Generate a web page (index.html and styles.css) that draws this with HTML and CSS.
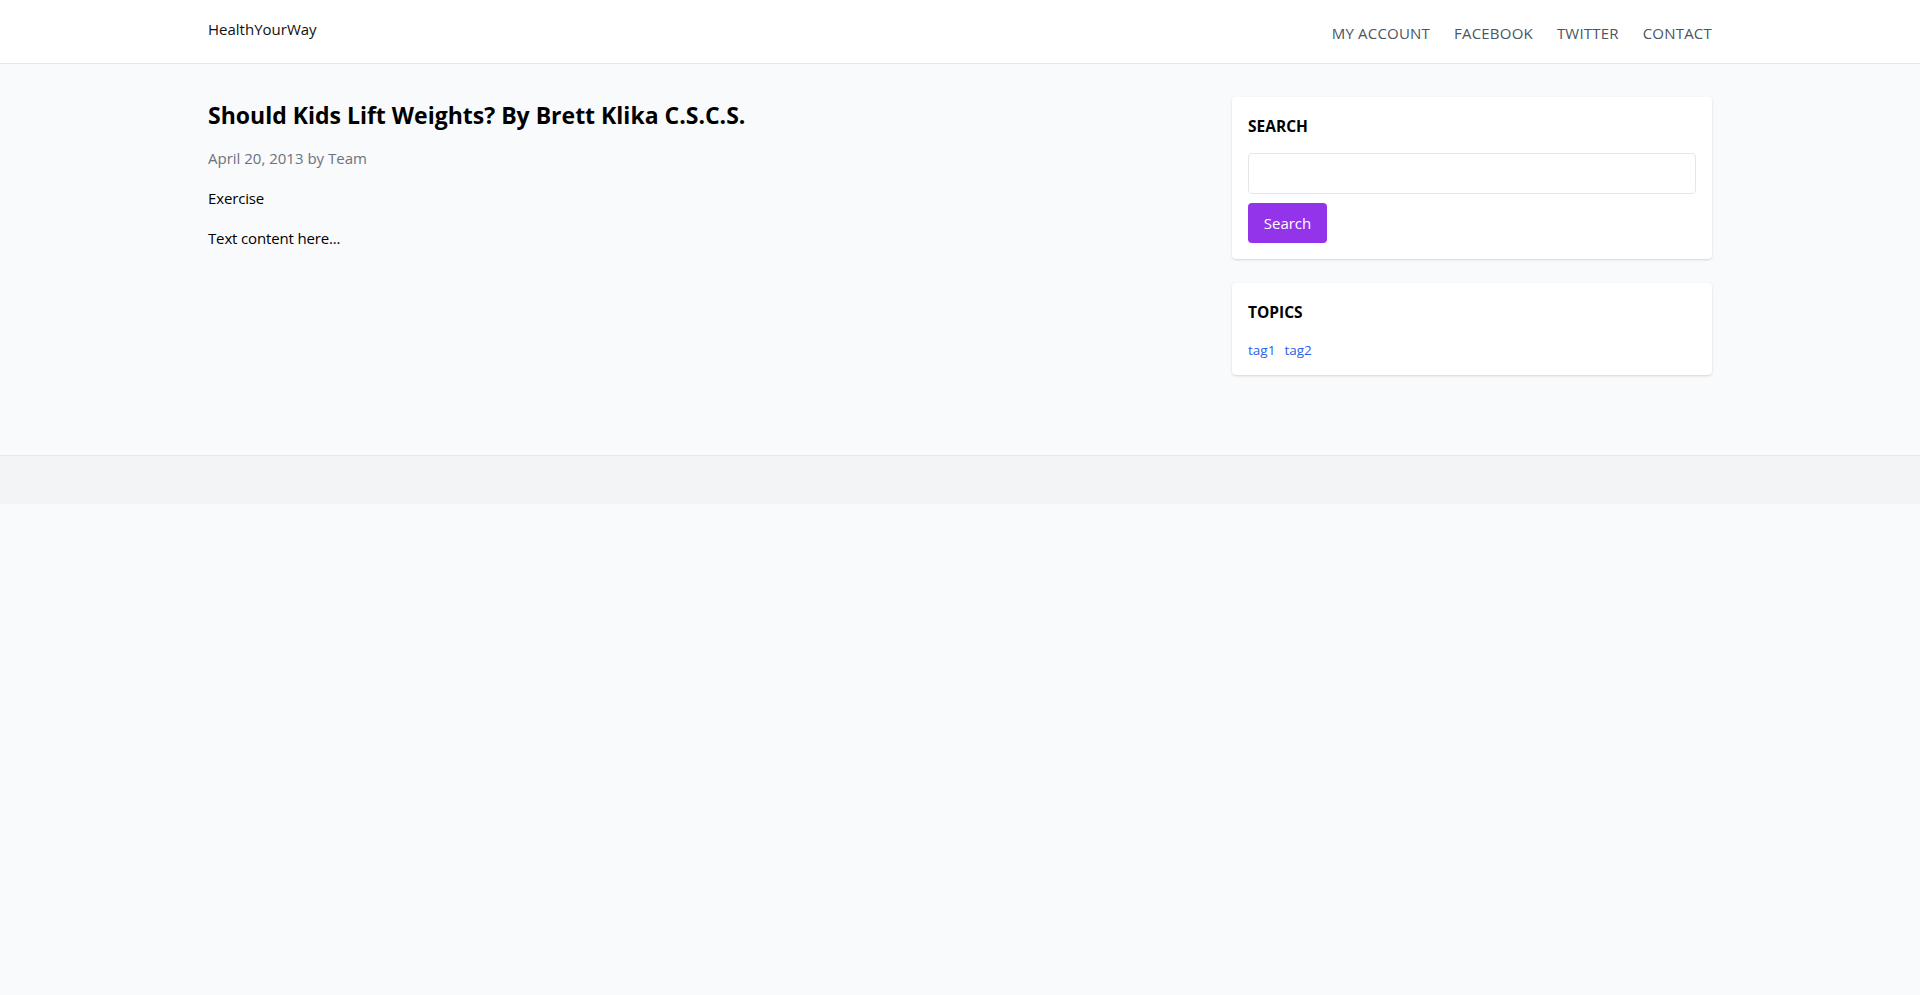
FILE: index.html
```html
<!DOCTYPE html>
<html lang="en">
<head>
<meta charset="utf-8">
<title>HealthYourWay</title>
<link rel="stylesheet" href="styles.css">
</head>
<body>
<header class="site-header">
  <div class="container header-inner">
    <a class="logo" href="#">HealthYourWay</a>
    <nav class="nav">
      <a href="#">MY ACCOUNT</a>
      <a href="#">FACEBOOK</a>
      <a href="#">TWITTER</a>
      <a href="#">CONTACT</a>
    </nav>
  </div>
</header>
<main class="container layout">
  <article class="post">
    <h1 class="post-title">Should Kids Lift Weights? By Brett Klika C.S.C.S.</h1>
    <p class="post-meta">April 20, 2013 by Team</p>
    <p class="post-cat">Exercise</p>
    <p class="post-body">Text content here...</p>
  </article>
  <aside class="sidebar">
    <section class="card">
      <h2 class="card-title">SEARCH</h2>
      <input class="search-input" type="text">
      <button class="search-btn">Search</button>
    </section>
    <section class="card">
      <h2 class="card-title">TOPICS</h2>
      <div class="tags"><a href="#">tag1</a><a href="#">tag2</a></div>
    </section>
  </aside>
</main>
<footer class="site-footer"></footer>
</body>
</html>
```
FILE: styles.css
```css
* { box-sizing: border-box; }
html, body { margin: 0; padding: 0; }
body {
  background: #f9fafb;
  font-family: "Open Sans", "Noto Sans", sans-serif;
  color: #000;
}
a { text-decoration: none; }
.container {
  max-width: 1536px;
  margin: 0 auto;
  padding: 0 16px;
}
.site-header {
  background: #fff;
  border-bottom: 1px solid #e5e7eb;
  height: 64px;
}
.header-inner {
  display: flex;
  justify-content: space-between;
  align-items: flex-start;
  height: 63px;
}
.logo {
  color: #111;
  font-size: 15px;
  line-height: 24px;
  margin-top: 17px;
}
.nav {
  display: flex;
  gap: 24px;
  margin-top: 21px;
}
.nav a {
  color: #4b5563;
  font-size: 15px;
  letter-spacing: 0.2px;
  line-height: 24px;
}
.layout {
  display: grid;
  grid-template-columns: repeat(3, 1fr);
  gap: 32px;
  padding-top: 33px;
  padding-bottom: 32px;
}
.post {
  grid-column: span 2;
}
.post-title {
  font-size: 23px;
  font-weight: 700;
  line-height: 32px;
  margin: 2px 0 15px;
}
.post-meta {
  color: #6b7280;
  font-size: 15px;
  line-height: 24px;
  margin: 0 0 16px;
}
.post-cat, .post-body {
  font-size: 15px;
  letter-spacing: -0.15px;
  line-height: 24px;
  margin: 0 0 16px;
}
.sidebar {
  display: flex;
  flex-direction: column;
  gap: 24px;
}
.card {
  background: #fff;
  border-radius: 4px;
  box-shadow: 0 1px 3px rgba(0,0,0,0.1), 0 1px 2px rgba(0,0,0,0.06);
  padding: 16px;
}
.card-title {
  font-size: 15.5px;
  font-weight: 700;
  line-height: 24px;
  margin: 1px 0 15px;
}
.search-input {
  display: block;
  width: 100%;
  height: 41px;
  border: 1px solid #e5e7eb;
  border-radius: 4px;
  background: #fff;
  margin: 0 0 9px;
  padding: 8px;
  font: inherit;
}
.search-btn {
  display: block;
  height: 40px;
  width: 79px;
  background: #9333ea;
  color: #fff;
  border: none;
  border-radius: 4px;
  font-family: inherit;
  font-size: 15px;
  padding: 0;
}
.tags {
  display: flex;
  gap: 9px;
  line-height: 20px;
  padding-top: 1px;
  margin-bottom: -1px;
}
.tags a {
  color: #2563eb;
  font-size: 13.5px;
}
.site-footer {
  background: #f3f4f6;
  border-top: 1px solid #e5e7eb;
  height: 49px;
  margin-top: 48px;
}
```
